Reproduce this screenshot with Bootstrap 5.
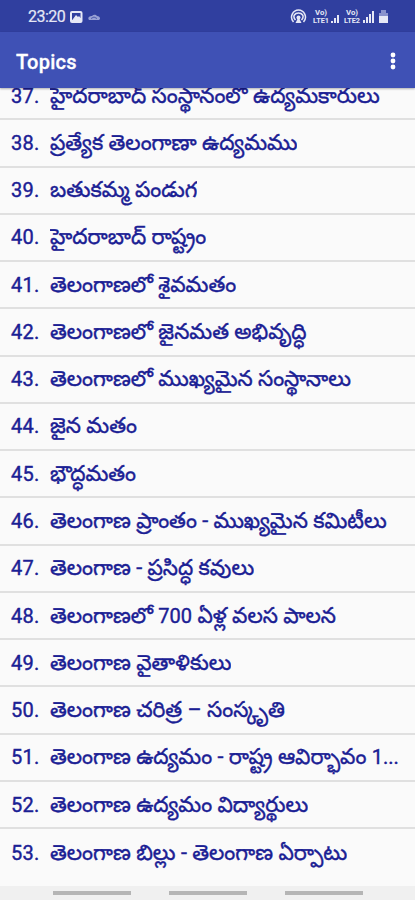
<!DOCTYPE html>
<html lang="te">
<head>
<meta charset="utf-8">
<meta name="viewport" content="width=device-width, initial-scale=1">
<title>Topics</title>
<link href="https://cdn.jsdelivr.net/npm/bootstrap@5.3.0/dist/css/bootstrap.min.css" rel="stylesheet">
<style>
body{height:900px;background:#fafafa;font-family:Roboto,"Noto Sans Telugu","Noto Sans",sans-serif}
.status-strip{height:32px;background:#303f9f;color:#e6e8f6;padding:2px 26px 0 28px;font-size:16px}
.clock{letter-spacing:-.5px;-webkit-text-stroke:.2px}
.app-bar{height:56px;background:#3f51b5;padding:3px 19px 0 16px;box-shadow:0 1px 2px rgba(0,0,0,.3);z-index:2}
.app-title{font-size:20px;font-weight:500;letter-spacing:.25px;-webkit-text-stroke:.3px}
.dots{margin-top:-1px}
.topics{margin-top:-15px}
.topic{height:47.27px;border-bottom:2px solid #e0e0e0;color:#1a2094;padding:0 11px;font-size:20px;line-height:28px}
.topic:last-child{border-bottom:0}
.num{width:39px;letter-spacing:.3px;-webkit-text-stroke:.4px}
.name{font-size:21.6px;line-height:40px;-webkit-text-stroke:.4px}
.latin{font-size:20px}
.nav-strip{height:14px;background:#f0f0f0;gap:38px}
.pill{width:78px;height:4px;background:#b5b5b5}
</style>
</head>
<body class="d-flex flex-column overflow-hidden m-0">
<div class="status-strip d-flex align-items-center justify-content-between flex-shrink-0">
 <div class="d-flex align-items-center"><span class="clock">23:20</span>
  <svg class="ms-1" width="34" height="14" viewBox="0 0 34 14"><rect width="12.500" height="12" x="1" y="1" rx="2" fill="#e6e8f6"/><path d="M3 3h8.500v5L7 7 3 10z" fill="#303f9f"/><path d="M4 9l3-4 2 2 1-1 1.500 2" fill="#e6e8f6"/><path d="M20 10c-2-3 1-4 3-4 2-2 4-1 5 0 3 0 4 3 2 4z" fill="#98a1d4"/><path d="M22 8.500l3-1.500 3 1.500" fill="none" stroke="#4b59ac"/></svg></div>
 <svg width="99" height="18" viewBox="0 0 99 18" fill="#e6e8f6"><g fill="none" stroke="#e6e8f6" stroke-width="1.500"><path d="M3.500 14C-1 9 3 2 8.500 2S18 9 13.500 14M5.500 12C2 8 5 5 8.500 5S15 8 11.500 12"/></g><circle cx="8.500" cy="9.500" r="2"/><path d="M8.500 9L5.500 15h6z"/><g font-family="Roboto" font-weight="700" font-size="7"><text x="25" y="7" textLength="12" lengthAdjust="spacingAndGlyphs">Vo)</text><text x="23" y="15.300" textLength="16" lengthAdjust="spacingAndGlyphs">LTE1</text><text x="56" y="7" textLength="12" lengthAdjust="spacingAndGlyphs">Vo)</text><text x="54" y="15.300" textLength="16" lengthAdjust="spacingAndGlyphs">LTE2</text></g><path d="M41 13h2v2h-2zM44 10h2v5h-2zM47 7h2v8h-2zM73 12h2v3h-2zM76 9h2v6h-2zM79 6h2v9h-2zM82 3h2v12h-2z"/><path d="M89 5h2V2h5v3h2v4h-9z" fill="#8992cd"/><path d="M89 8h9v7h-9z"/></svg>
</div>
<header class="app-bar d-flex align-items-center justify-content-between text-white flex-shrink-0 position-relative"><span class="app-title">Topics</span>
<svg class="dots" width="6" height="18" viewBox="0 0 6 18" fill="#fff"><circle cx="3" cy="3" r="2.400"/><circle cx="3" cy="9" r="2.400"/><circle cx="3" cy="15" r="2.400"/></svg></header>
<ul class="topics list-unstyled mb-0 flex-grow-1">
<li class="topic d-flex align-items-center"><span class="num flex-shrink-0">37.</span><span class="name text-truncate">హైదరాబాద్ సంస్థానంలో ఉద్యమకారులు</span></li>
<li class="topic d-flex align-items-center"><span class="num flex-shrink-0">38.</span><span class="name text-truncate">ప్రత్యేక తెలంగాణా ఉద్యమము</span></li>
<li class="topic d-flex align-items-center"><span class="num flex-shrink-0">39.</span><span class="name text-truncate">బతుకమ్మ పండుగ</span></li>
<li class="topic d-flex align-items-center"><span class="num flex-shrink-0">40.</span><span class="name text-truncate">హైదరాబాద్ రాష్ట్రం</span></li>
<li class="topic d-flex align-items-center"><span class="num flex-shrink-0">41.</span><span class="name text-truncate">తెలంగాణలో శైవమతం</span></li>
<li class="topic d-flex align-items-center"><span class="num flex-shrink-0">42.</span><span class="name text-truncate">తెలంగాణలో జైనమత అభివృద్ధి</span></li>
<li class="topic d-flex align-items-center"><span class="num flex-shrink-0">43.</span><span class="name text-truncate">తెలంగాణలో ముఖ్యమైన సంస్థానాలు</span></li>
<li class="topic d-flex align-items-center"><span class="num flex-shrink-0">44.</span><span class="name text-truncate">జైన మతం</span></li>
<li class="topic d-flex align-items-center"><span class="num flex-shrink-0">45.</span><span class="name text-truncate">భౌద్ధమతం</span></li>
<li class="topic d-flex align-items-center"><span class="num flex-shrink-0">46.</span><span class="name text-truncate">తెలంగాణ ప్రాంతం - ముఖ్యమైన కమిటీలు</span></li>
<li class="topic d-flex align-items-center"><span class="num flex-shrink-0">47.</span><span class="name text-truncate">తెలంగాణ - ప్రసిద్ధ కవులు</span></li>
<li class="topic d-flex align-items-center"><span class="num flex-shrink-0">48.</span><span class="name text-truncate">తెలంగాణలో <span class="latin">700</span> ఏళ్ల వలస పాలన</span></li>
<li class="topic d-flex align-items-center"><span class="num flex-shrink-0">49.</span><span class="name text-truncate">తెలంగాణ వైతాళికులు</span></li>
<li class="topic d-flex align-items-center"><span class="num flex-shrink-0">50.</span><span class="name text-truncate">తెలంగాణ చరిత్ర – సంస్కృతి</span></li>
<li class="topic d-flex align-items-center"><span class="num flex-shrink-0">51.</span><span class="name text-nowrap">తెలంగాణ ఉద్యమం - రాష్ట్ర ఆవిర్భావం <span class="latin">1...</span></span></li>
<li class="topic d-flex align-items-center"><span class="num flex-shrink-0">52.</span><span class="name text-truncate">తెలంగాణ ఉద్యమం విద్యార్థులు</span></li>
<li class="topic d-flex align-items-center"><span class="num flex-shrink-0">53.</span><span class="name text-truncate">తెలంగాణ బిల్లు - తెలంగాణ ఏర్పాటు</span></li>
</ul>
<footer class="nav-strip d-flex align-items-center justify-content-center flex-shrink-0"><span class="pill"></span><span class="pill"></span><span class="pill"></span></footer>
<script src="https://cdn.jsdelivr.net/npm/bootstrap@5.3.0/dist/js/bootstrap.bundle.min.js"></script>
</body>
</html>
